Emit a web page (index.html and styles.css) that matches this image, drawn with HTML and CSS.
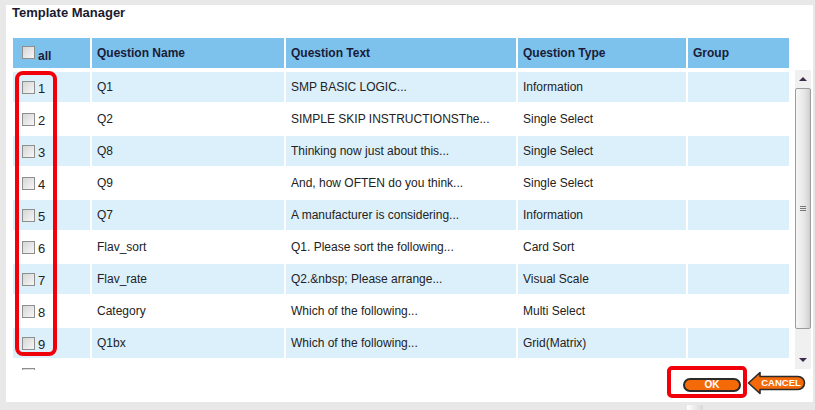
FILE: index.html
```html
<!DOCTYPE html>
<html lang="en">
<head>
  <meta charset="UTF-8" />
  <title>Template Manager</title>
  <link rel="stylesheet" href="styles.css">
</head>
<body>
  <div class="panel">
    <h1 class="title">Template Manager</h1>

    <table class="grid head">
      <colgroup><col class="c1"><col class="c2"><col class="c3"><col class="c4"><col class="c5"></colgroup>
      <tr>
        <th><span class="check"></span><span class="all">all</span></th>
        <th>Question Name</th>
        <th>Question Text</th>
        <th>Question Type</th>
        <th>Group</th>
      </tr>
    </table>

    <div class="body">
      <div class="rows">
        <table class="grid">
          <colgroup><col class="c1"><col class="c2"><col class="c3"><col class="c4"><col class="c5"></colgroup>
          <tr><td><span class="check"></span><span class="num">1</span></td><td>Q1</td><td>SMP BASIC LOGIC...</td><td>Information</td><td></td></tr>
          <tr><td><span class="check"></span><span class="num">2</span></td><td>Q2</td><td>SIMPLE SKIP INSTRUCTIONSThe...</td><td>Single Select</td><td></td></tr>
          <tr><td><span class="check"></span><span class="num">3</span></td><td>Q8</td><td>Thinking now just about this...</td><td>Single Select</td><td></td></tr>
          <tr><td><span class="check"></span><span class="num">4</span></td><td>Q9</td><td>And, how OFTEN do you think...</td><td>Single Select</td><td></td></tr>
          <tr><td><span class="check"></span><span class="num">5</span></td><td>Q7</td><td>A manufacturer is considering...</td><td>Information</td><td></td></tr>
          <tr><td><span class="check"></span><span class="num">6</span></td><td>Flav_sort</td><td>Q1. Please sort the following...</td><td>Card Sort</td><td></td></tr>
          <tr><td><span class="check"></span><span class="num">7</span></td><td>Flav_rate</td><td>Q2.&amp;nbsp; Please arrange...</td><td>Visual Scale</td><td></td></tr>
          <tr><td><span class="check"></span><span class="num">8</span></td><td>Category</td><td>Which of the following...</td><td>Multi Select</td><td></td></tr>
          <tr><td><span class="check"></span><span class="num">9</span></td><td>Q1bx</td><td>Which of the following...</td><td>Grid(Matrix)</td><td></td></tr>
          <tr><td><span class="check"></span></td><td></td><td></td><td></td><td></td></tr>
        </table>
        <div class="mark"></div>
      </div>

      <div class="scrollbar">
        <div class="sb-btn"><span class="arrow up"></span></div>
        <div class="sb-thumb"><span class="grip"></span></div>
        <div class="sb-btn bottom"><span class="arrow down"></span></div>
      </div>
    </div>

    <div class="actions">
      <div class="ok-mark">
        <button class="btn-ok">OK</button>
      </div>
      <div class="btn-cancel">
        <svg width="60" height="24" viewBox="0 0 60 24">
          <path d="M1.5 12 L13 1.5 L13 5.5 L51 5.5 A6.5 6.5 0 0 1 51 18.5 L13 18.5 L13 22.5 Z" fill="#f56a08" stroke="#2a2a2a" stroke-width="1.6" stroke-linejoin="round" />
        </svg>
        <span class="cancel-label">CANCEL</span>
      </div>
    </div>
  </div>
  <div class="stub"></div>
</body>
</html>
```

FILE: styles.css
```css
* { box-sizing: border-box; }

body {
  margin: 0;
  background: #e8e8e8;
  font-family: "Liberation Sans", Arial, sans-serif;
  font-size: 12px;
  color: #222;
  position: relative;
  height: 410px;
  overflow: hidden;
}

.panel {
  margin: 5px 2px 0 6px;
  height: 397px;
  background: #fff;
}

.title {
  margin: 0 0 15px 6px;
  font-size: 13px;
  line-height: 16px;
  font-weight: bold;
  color: #1a1a2e;
}

.grid {
  width: 780px;
  table-layout: fixed;
  border-collapse: separate;
  border-spacing: 2px;
}

.c1 { width: 77px; }
.c2 { width: 192px; }
.c3 { width: 230px; }
.c4 { width: 168px; }
.c5 { width: 101px; }

.head { margin-left: 5px; }

.grid th {
  height: 30px;
  background: #7cc2ec;
  text-align: left;
  padding: 0 5px;
  font-weight: bold;
  color: #1b1b38;
  white-space: nowrap;
}

.grid td {
  height: 30px;
  padding: 0 5px;
  white-space: nowrap;
  overflow: hidden;
}

.grid tr:nth-child(odd) td { background: #dcf0fc; }

.grid th:first-child,
.grid td:first-child { padding-left: 9px; }

.check {
  display: inline-block;
  width: 13px;
  height: 13px;
  border: 1px solid #8e8e8e;
  background: linear-gradient(135deg, #d6d6d6, #f6f6f6);
  vertical-align: -2px;
}

.all {
  margin-left: 3px;
  position: relative;
  top: 3px;
}

.num {
  margin-left: 3px;
  font-size: 13px;
  position: relative;
  top: 1px;
}

.body {
  display: flex;
  margin-left: 5px;
}

.rows {
  width: 780px;
  height: 300px;
  overflow: hidden;
  position: relative;
}

.mark {
  position: absolute;
  left: 4px;
  top: 1px;
  width: 42px;
  height: 285px;
  border: 4px solid #f2000a;
  border-radius: 8px;
}

.scrollbar {
  margin-left: 4px;
  width: 16px;
  height: 299px;
  background: #f0f0f0;
  display: flex;
  flex-direction: column;
}

.sb-btn {
  height: 18px;
  display: flex;
  align-items: center;
  justify-content: center;
}

.sb-btn.bottom { margin-top: auto; height: 18px; }

.arrow {
  width: 0;
  height: 0;
  border-left: 4px solid transparent;
  border-right: 4px solid transparent;
}

.arrow.up { border-bottom: 4px solid #3c2a4a; }
.arrow.down { border-top: 4px solid #3c2a4a; }

.sb-thumb {
  height: 241px;
  border: 1px solid #9c9c9c;
  border-radius: 2px;
  background: linear-gradient(to right, #f6f6f6, #e6e6e6 60%, #cfcfcf);
  display: flex;
  align-items: center;
  justify-content: center;
}

.grip {
  width: 6px;
  height: 5px;
  border-top: 1px solid #777;
  border-bottom: 1px solid #777;
  position: relative;
}

.grip::after {
  content: "";
  position: absolute;
  left: 0;
  right: 0;
  top: 1px;
  border-top: 1px solid #777;
}

.actions {
  display: flex;
  justify-content: flex-end;
  align-items: center;
  margin-top: -4px;
  padding-right: 6px;
  height: 32px;
}

.ok-mark {
  width: 80px;
  height: 32px;
  border: 4px solid #f2000a;
  border-radius: 5px;
  padding: 8px 2px 2px 12px;
}

.btn-ok {
  display: block;
  width: 58px;
  height: 14px;
  padding: 0;
  border: 2px solid #2a2a2a;
  border-radius: 7px;
  background: #f56a08;
  color: #fff;
  font-family: "Liberation Sans", Arial, sans-serif;
  font-size: 10px;
  font-weight: bold;
  line-height: 10px;
}

.btn-cancel {
  position: relative;
  width: 60px;
  height: 24px;
  margin-top: 1px;
}

.btn-cancel svg { display: block; }

.cancel-label {
  position: absolute;
  left: 12px;
  top: 6px;
  width: 44px;
  text-align: center;
  color: #fff;
  font-size: 9.5px;
  font-weight: bold;
  line-height: 12px;
}

.stub {
  position: absolute;
  left: 687px;
  top: 405px;
  width: 16px;
  height: 5px;
  background: linear-gradient(to right, #fff, #d8d8d8);
}
```
